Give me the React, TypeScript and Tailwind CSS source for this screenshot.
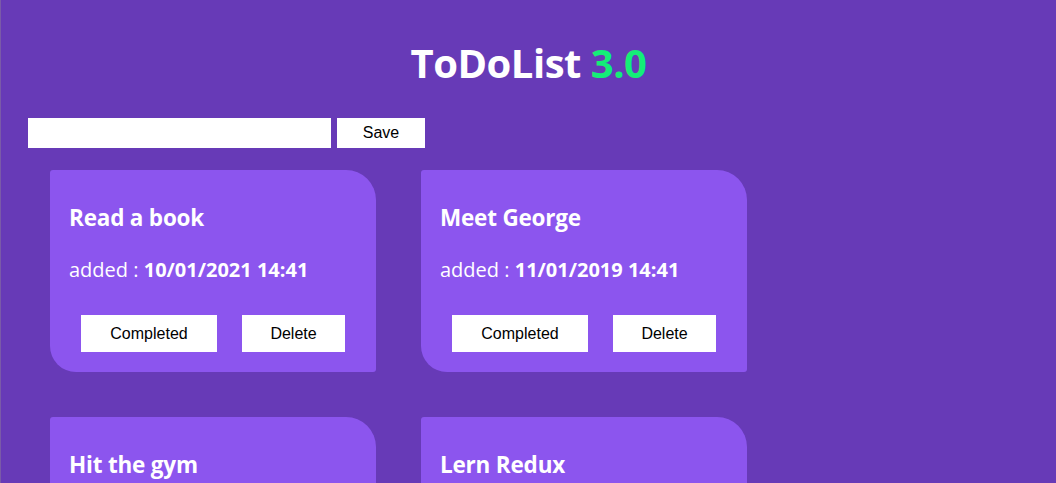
import { useState } from 'react';

type Todo = { id: number; title: string; added: string };

const todos: Todo[] = [
   { id: 1, title: 'Read a book', added: '10/01/2021 14:41' },
   { id: 2, title: 'Meet George', added: '11/01/2019 14:41' },
   { id: 3, title: 'Hit the gym', added: '10/01/2021 14:41' },
   { id: 4, title: 'Lern Redux', added: '11/01/2019 14:41' },
];

const TodoCard = ({ todo }: { todo: Todo }) => (
   <div className="w-[326px] h-[202px] bg-[#8c55ee] rounded-tl-[3px] rounded-tr-[30px] rounded-br-[3px] rounded-bl-[26px] pl-[19px] pt-[33px] pb-5 flex flex-col">
      <h2 className="text-[22.5px] font-bold text-white leading-[30px] font-['Open_Sans',sans-serif] tracking-[-0.2px]">
         {todo.title}
      </h2>
      <p className="mt-[24px] text-[20px] text-white leading-[26px] font-['Open_Sans',sans-serif]">
         added : <span className="font-bold">{todo.added}</span>
      </p>
      <div className="mt-auto flex justify-center gap-[25px] pr-[19px]">
         <button className="h-[37px] w-[136px] bg-white text-black text-base font-['Liberation_Sans',Arial,sans-serif]">
            Completed
         </button>
         <button className="h-[37px] w-[103px] bg-white text-black text-base font-['Liberation_Sans',Arial,sans-serif]">
            Delete
         </button>
      </div>
   </div>
);

export default function App() {
   const [value, setValue] = useState('');
   return (
      <div className="h-screen w-full bg-[#673ab7] border-l border-l-[#7a5aa8] overflow-hidden">
         <h1 className="pt-[39px] text-center text-[40px] leading-[48px] font-bold text-white font-['Open_Sans',sans-serif] tracking-[-0.5px]">
            ToDoList <span className="text-[#14ee78]">3.0</span>
         </h1>
         <form
            className="mt-[31px] ml-[27px] flex gap-[6px]"
            onSubmit={(e) => e.preventDefault()}
         >
            <input
               value={value}
               onChange={(e) => setValue(e.target.value)}
               className="w-[303px] h-[30px] bg-white outline-none px-1"
            />
            <button className="w-[88px] h-[30px] bg-white text-black text-base font-['Liberation_Sans',Arial,sans-serif]">
               Save
            </button>
         </form>
         <div className="mt-[22px] ml-[49px] grid grid-cols-[326px_326px] gap-x-[45px] gap-y-[45px]">
            {todos.map((todo) => (
               <TodoCard key={todo.id} todo={todo} />
            ))}
         </div>
      </div>
   );
}
